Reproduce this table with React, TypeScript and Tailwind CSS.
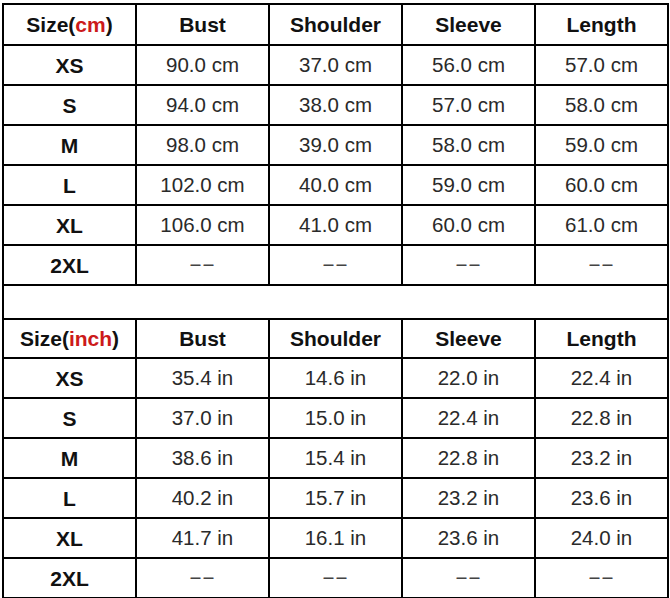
import React from "react";

const cmRows = [
  ["XS", "90.0 cm", "37.0 cm", "56.0 cm", "57.0 cm"],
  ["S", "94.0 cm", "38.0 cm", "57.0 cm", "58.0 cm"],
  ["M", "98.0 cm", "39.0 cm", "58.0 cm", "59.0 cm"],
  ["L", "102.0 cm", "40.0 cm", "59.0 cm", "60.0 cm"],
  ["XL", "106.0 cm", "41.0 cm", "60.0 cm", "61.0 cm"],
  ["2XL", "--", "--", "--", "--"],
];

const inRows = [
  ["XS", "35.4 in", "14.6 in", "22.0 in", "22.4 in"],
  ["S", "37.0 in", "15.0 in", "22.4 in", "22.8 in"],
  ["M", "38.6 in", "15.4 in", "22.8 in", "23.2 in"],
  ["L", "40.2 in", "15.7 in", "23.2 in", "23.6 in"],
  ["XL", "41.7 in", "16.1 in", "23.6 in", "24.0 in"],
  ["2XL", "--", "--", "--", "--"],
];

const headers = ["Bust", "Shoulder", "Sleeve", "Length"];

function Cell({ children, bold, h }: { children: React.ReactNode; bold?: boolean; h: string }) {
  return (
    <div
      className={`bg-white flex items-center justify-center ${h} ${
        bold ? "font-bold text-[#111] text-[21px]" : "text-[#2a2a2a] text-[20.5px]"
      } leading-none`}
    >
      {children}
    </div>
  );
}

function Dash() {
  return <span className="tracking-[1px] text-[#444]">−−</span>;
}

function Block({ unit, rows, headH }: { unit: string; rows: string[][]; headH: string }) {
  return (
    <>
      <Cell bold h={headH}>
        <span>
          Size(<span className="text-[#cc1a1a]">{unit}</span>)
        </span>
      </Cell>
      {headers.map((h) => (
        <Cell key={h} bold h={headH}>
          {h}
        </Cell>
      ))}
      {rows.map((r) =>
        r.map((v, i) => (
          <Cell key={r[0] + i} bold={i === 0} h="h-[38px]">
            {v === "--" ? <Dash /> : v}
          </Cell>
        ))
      )}
    </>
  );
}

export default function App() {
  return (
    <div className="w-[670px] h-[598px] bg-white overflow-hidden pt-[3px] pl-[2px]" style={{ fontFamily: '"Liberation Sans", Arial, sans-serif' }}>
      <div className="w-[667px] bg-black p-[2px] grid grid-cols-5 gap-[2px]">
        <Block unit="cm" rows={cmRows} headH="h-[39px]" />
        <div className="col-span-5 bg-white h-[32px]" />
        <Block unit="inch" rows={inRows} headH="h-[37px]" />
      </div>
    </div>
  );
}
